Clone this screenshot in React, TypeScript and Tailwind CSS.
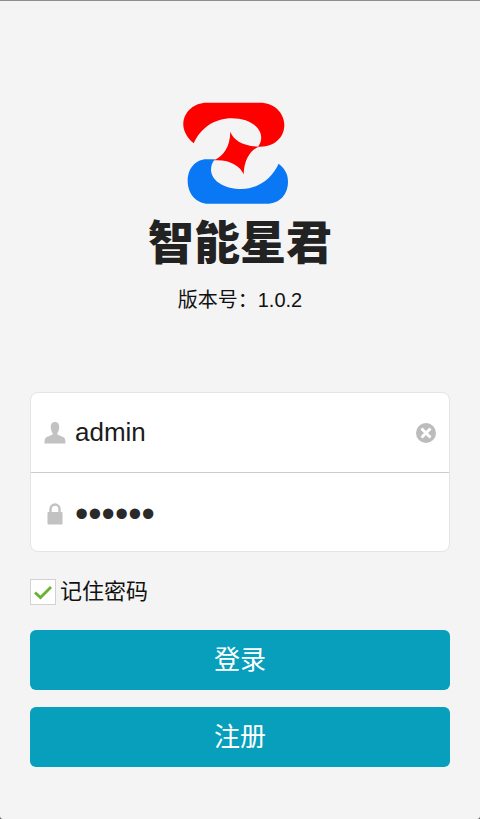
import { useState } from 'react';

function Logo() {
  return (
    <svg viewBox="36 36 348 306" className="h-[102px] w-[116px]" aria-hidden="true">
      <path
        fill="#ff0000"
        d="M71 160C50 142 38 120 40 98C43 65 72 38 110 38H270C312 38 343 68 343 105C343 143 312 170 272 170H264C275 157 276 140 270 126C258 100 225 85 185 85C135 85 93 113 71 160Z"
      />
      <path
        fill="#0a78f5"
        d="M135 208H110C75 208 53 238 53 272C53 312 80 341 115 341H290C330 341 354 312 354 275C354 250 343 235 326 221C305 267 262 297 215 297C165 297 125 275 123 240C123 228 127 216 135 208Z"
      />
      <path
        fill="#ff0000"
        d="M181 125C190 150 218 168 266 170C242 180 222 208 221 253C210 228 180 208 132 211C160 198 180 172 181 125Z"
      />
    </svg>
  );
}

function UserIcon() {
  return (
    <svg viewBox="0 0 22 22" className="h-[22px] w-[22px]" fill="#c2c2c2" aria-hidden="true">
      <path d="M11 0C8 0 6.800 2.200 6.800 5.200C6.800 7.600 7.600 9.600 8.600 11V12.600L3 15C1 15.900 .5 17.500 .5 21.500H21.500C21.500 17.500 21 15.900 19 15L13.400 12.600V11C14.400 9.600 15.200 7.600 15.200 5.200C15.200 2.200 14 0 11 0Z" />
    </svg>
  );
}

function LockIcon() {
  return (
    <svg viewBox="0 0 22 22" className="h-[22px] w-[22px]" aria-hidden="true">
      <path d="M6.500 10V6a4.500 4.500 0 0 1 9 0V10" fill="none" stroke="#c2c2c2" strokeWidth="2.400" />
      <rect x="3.500" y="9" width="15" height="12.500" rx="1" fill="#c2c2c2" />
    </svg>
  );
}

function ClearIcon() {
  return (
    <svg viewBox="0 0 20 20" className="h-5 w-5" aria-hidden="true">
      <circle cx="10" cy="10" r="10" fill="#bcbcbc" />
      <path d="M5.500 5.500L14.500 14.500M14.500 5.500L5.500 14.500" stroke="#fff" strokeWidth="3" />
    </svg>
  );
}

export default function App() {
  const [username, setUsername] = useState('admin');
  const [password, setPassword] = useState('123456');
  const [remember, setRemember] = useState(true);

  return (
    <div className="flex min-h-screen bg-[#555555] font-['Liberation_Sans','Noto_Sans_CJK_SC',sans-serif]">
      <main className="w-full rounded-b-[3px] border-t border-[#8e8e8e] bg-[#f4f4f4] px-[30px]">
        <header className="flex flex-col items-center pt-[101px]">
          <Logo />
          <h1 className="mt-3 text-[46px] leading-[54px] font-black text-[#222222]">智能星君</h1>
          <p className="mt-4 text-[20px] leading-7 text-[#111111]">版本号：1.0.2</p>
        </header>

        <form className="mt-[78px]" onSubmit={(e) => e.preventDefault()}>
          <div className="rounded-lg border border-[#e4e4e4] bg-white">
            <div className="flex h-20 items-center border-b border-[#cccccc] px-[13px]">
              <label htmlFor="username" aria-label="用户名">
                <UserIcon />
              </label>
              <input
                id="username"
                type="text"
                value={username}
                onChange={(e) => setUsername(e.target.value)}
                className="ml-[9px] h-12 min-w-0 flex-1 bg-transparent text-[26px] text-[#1c1c1c] outline-none"
              />
              <button type="button" aria-label="清除" onClick={() => setUsername('')}>
                <ClearIcon />
              </button>
            </div>
            <div className="flex h-[78px] items-center px-[13px] pt-1">
              <label htmlFor="password" aria-label="密码">
                <LockIcon />
              </label>
              {/* Larger size than the name field so the bullets come out bold */}
              <input
                id="password"
                type="password"
                value={password}
                onChange={(e) => setPassword(e.target.value)}
                className="ml-[9px] h-12 min-w-0 flex-1 bg-transparent text-[38px] text-[#2a2a2a] outline-none"
              />
            </div>
          </div>

          <div className="mt-6 flex h-8 items-center">
            <span className="relative h-[26px] w-[26px]">
              <input
                id="remember"
                type="checkbox"
                checked={remember}
                onChange={(e) => setRemember(e.target.checked)}
                className="block h-[26px] w-[26px] appearance-none border border-[#d2d2d2] bg-white"
              />
              {remember && (
                <svg viewBox="0 0 26 26" className="pointer-events-none absolute inset-0" aria-hidden="true">
                  <path d="M5 13.500L10.500 18.500L21 8" fill="none" stroke="#67b32e" strokeWidth="2.800" />
                </svg>
              )}
            </span>
            <label htmlFor="remember" className="pl-1 text-[22px] leading-8 text-[#111111]">
              记住密码
            </label>
          </div>

          <div className="mt-[22px] flex flex-col gap-[17px]">
            <button type="submit" className="h-[60px] rounded-md bg-[#079fbb] text-[26px] text-white">
              登录
            </button>
            <button type="button" className="h-[60px] rounded-md bg-[#079fbb] text-[26px] text-white">
              注册
            </button>
          </div>
        </form>
      </main>
    </div>
  );
}
